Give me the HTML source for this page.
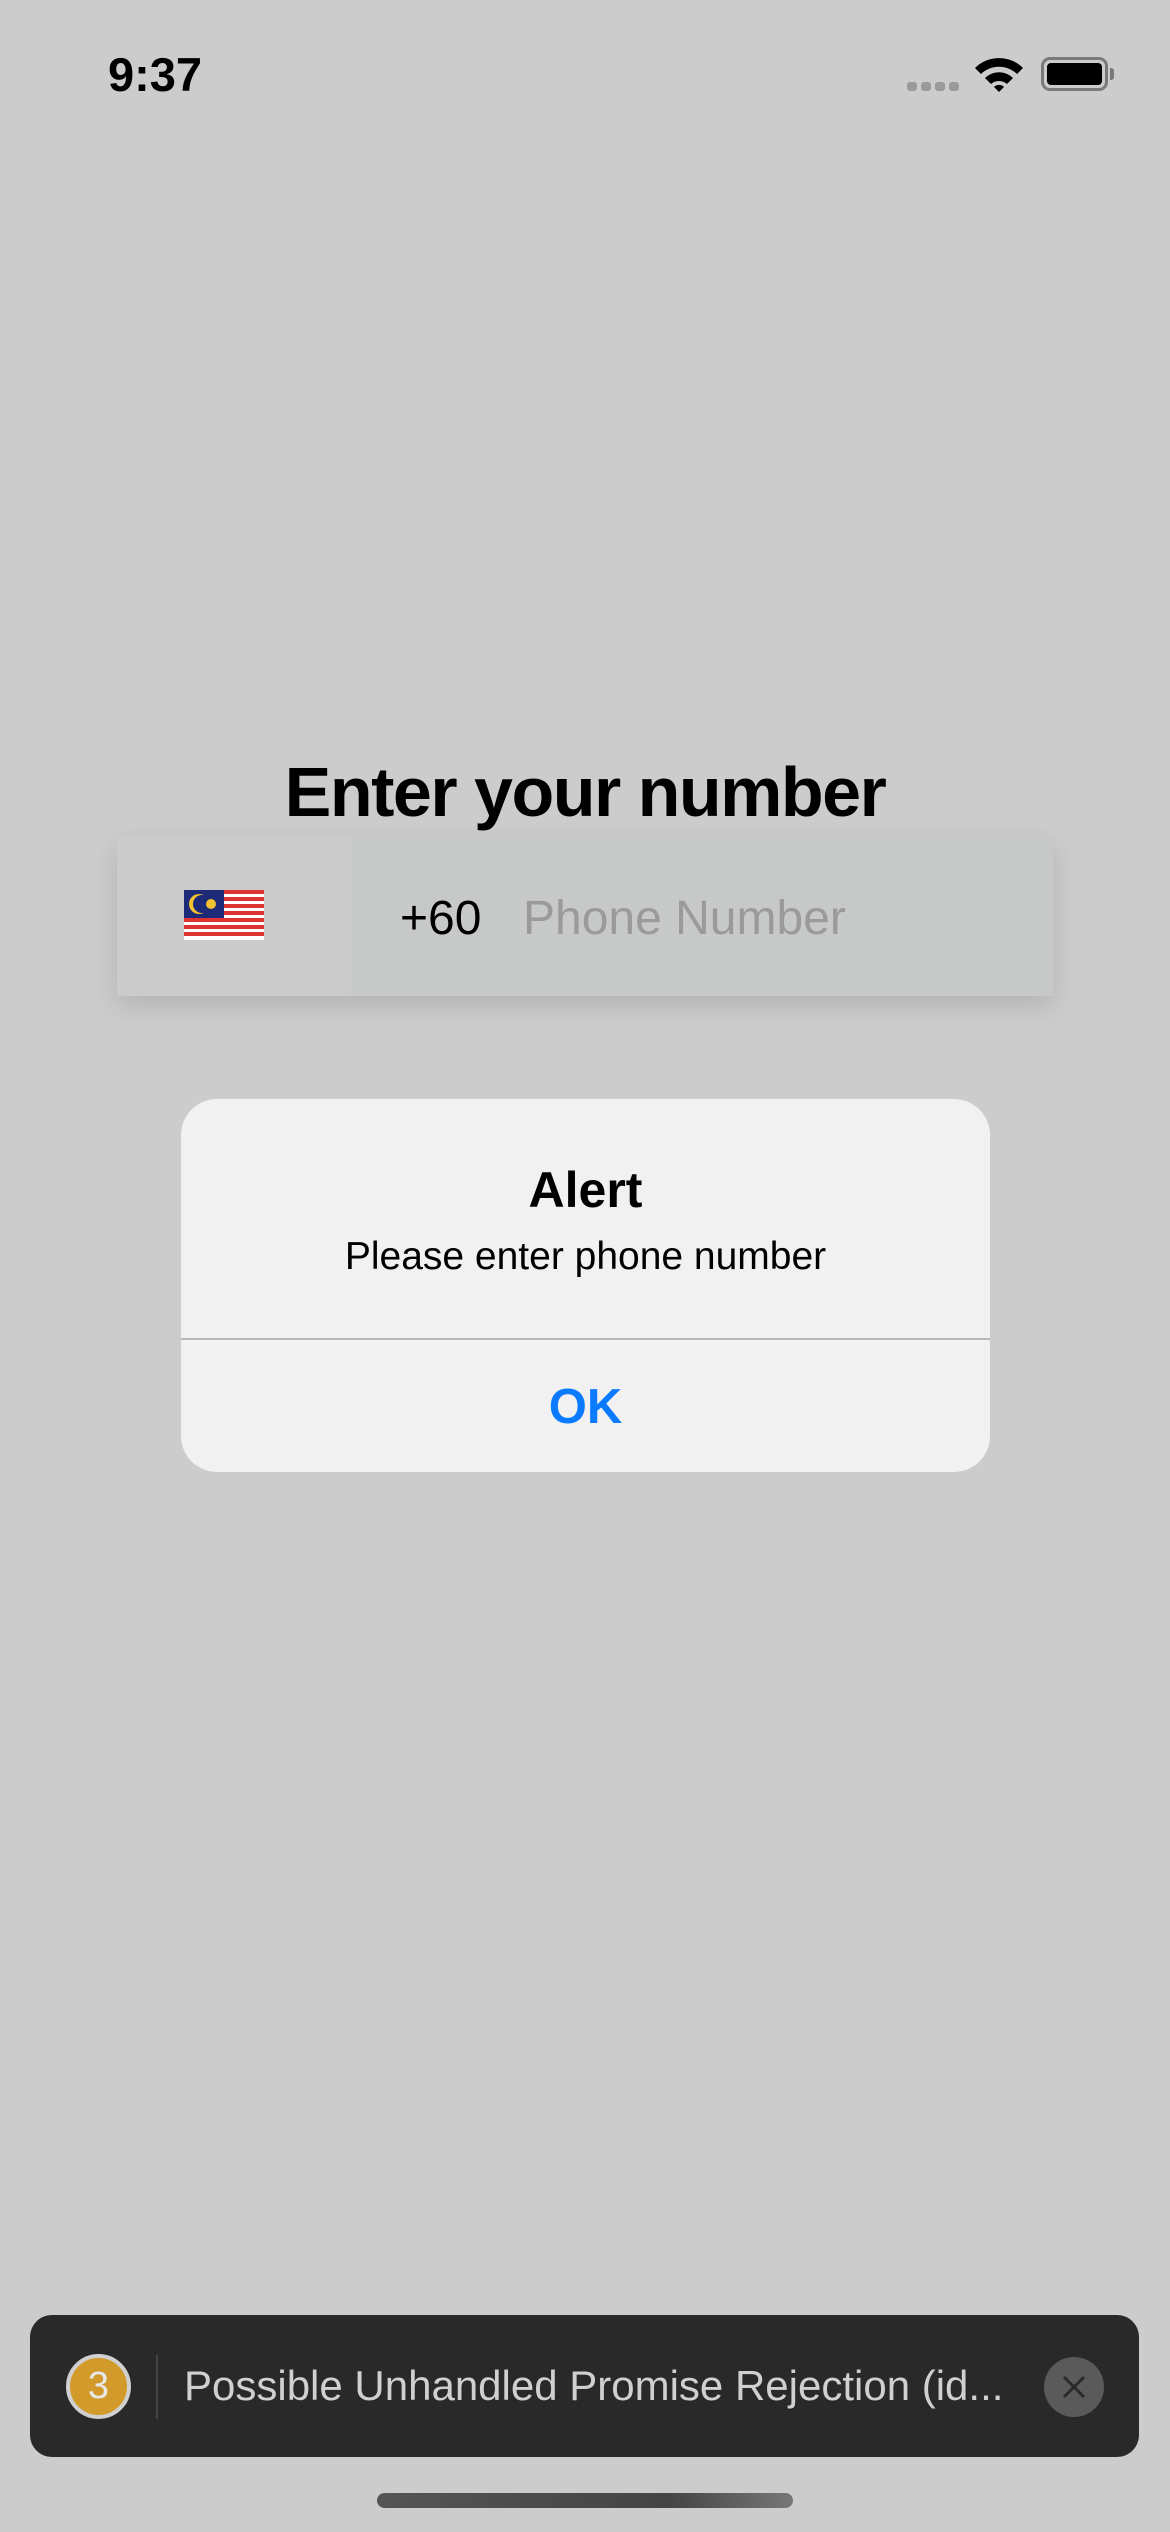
<!DOCTYPE html>
<html><head><meta charset="utf-8"><style>
*{margin:0;padding:0;box-sizing:border-box}
body{width:1170px;height:2532px;background:#cccccc;position:relative;overflow:hidden;font-family:"Liberation Sans",sans-serif}
.abs{position:absolute}
</style></head><body>
<div class="abs" style="left:108px;top:50px;font-size:47px;font-weight:bold;letter-spacing:0px;line-height:50px">9:37</div>
<div class="abs" style="left:907px;top:82px;width:52px;height:9px;display:flex;gap:4px">
<div style="flex:1;background:#9a9a9a;border-radius:3px"></div><div style="flex:1;background:#9a9a9a;border-radius:3px"></div><div style="flex:1;background:#9a9a9a;border-radius:3px"></div><div style="flex:1;background:#9a9a9a;border-radius:3px"></div></div>
<svg class="abs" style="left:972px;top:54px" width="54" height="38" viewBox="0 0 54 38"><path d="M3 14 A34 34 0 0 1 51 14 L45 20 A26 26 0 0 0 9 20Z" fill="#000"/><path d="M13 24 A20 20 0 0 1 41 24 L35 30 A12 12 0 0 0 19 30Z" fill="#000"/><path d="M22 33 A7 7 0 0 1 32 33 L27 38Z" fill="#000"/></svg>
<div class="abs" style="left:1041px;top:57px;width:67px;height:34px;border:3px solid #7a7a7a;border-radius:9px;padding:3px"><div style="width:100%;height:100%;background:#000;border-radius:4px"></div></div>
<div class="abs" style="left:1110px;top:68px;width:4px;height:12px;background:#7a7a7a;border-radius:0 3px 3px 0"></div>

<div class="abs" style="left:0;width:1170px;top:752px;text-align:center;font-size:70px;font-weight:bold;letter-spacing:-1.5px;line-height:80px">Enter your number</div>
<div class="abs" style="left:117px;top:836px;width:936px;height:160px;background:#c7c8c8;box-shadow:0 10px 24px rgba(0,0,0,0.12)">
<div class="abs" style="left:0;top:0;width:234px;height:160px;background:#cbcbcb"></div>
<svg class="abs" style="left:67px;top:50px" width="80" height="58" viewBox="0 0 80 58">
<g><rect x="0" y="4" width="80" height="50" fill="#fff"/>
<rect x="0" y="4" width="80" height="4" fill="#d33"/><rect x="0" y="11" width="80" height="4" fill="#d33"/><rect x="0" y="18" width="80" height="4" fill="#d33"/><rect x="0" y="25" width="80" height="4" fill="#d33"/><rect x="0" y="32" width="80" height="4" fill="#d33"/><rect x="0" y="39" width="80" height="4" fill="#d33"/><rect x="0" y="46" width="80" height="4" fill="#d33"/>
<rect x="0" y="4" width="40" height="28" fill="#1c2a78"/>
<circle cx="15" cy="18" r="10" fill="#f2c230"/><circle cx="18" cy="18" r="9" fill="#1c2a78"/><circle cx="27" cy="18" r="5" fill="#f2c230"/></g></svg>
<div class="abs" style="left:283px;top:56px;font-size:48px;line-height:54px;color:#000">+60</div>
<div class="abs" style="left:406px;top:56px;font-size:48px;line-height:54px;color:#9a9a9a">Phone Number</div>
</div>

<div class="abs" style="left:181px;top:1099px;width:809px;height:373px;background:#f0f1f0;border-radius:36px;overflow:hidden">
<div class="abs" style="left:0;width:100%;top:63px;text-align:center;font-size:50px;font-weight:bold;line-height:56px">Alert</div>
<div class="abs" style="left:0;width:100%;top:136px;text-align:center;font-size:39px;line-height:44px">Please enter phone number</div>
<div class="abs" style="left:0;width:100%;top:239px;height:2px;background:#b8b8b8"></div>
<div class="abs" style="left:0;width:100%;top:280px;text-align:center;font-size:49px;font-weight:bold;line-height:56px;color:#0a7aff">OK</div>
</div>

<div class="abs" style="left:30px;top:2315px;width:1109px;height:142px;background:#292929;border-radius:22px">
<div class="abs" style="left:36px;top:39px;width:65px;height:65px;border-radius:50%;background:#d29a2a;border:4px solid #d0d0d0;color:#e8e8e8;font-size:38px;text-align:center;line-height:57px">3</div>
<div class="abs" style="left:126px;top:40px;width:2px;height:64px;background:#444"></div>
<div class="abs" style="left:154px;top:47px;font-size:42px;line-height:48px;color:#d0d0d0;white-space:nowrap">Possible Unhandled Promise Rejection (id...</div>
<div class="abs" style="left:1014px;top:42px;width:60px;height:60px;border-radius:50%;background:#5a5a5a"></div>
<svg class="abs" style="left:1031px;top:59px" width="26" height="26"><path d="M3 3L23 23M23 3L3 23" stroke="#2a2a2a" stroke-width="3"/></svg>
</div>
<div class="abs" style="left:377px;top:2493px;width:416px;height:15px;border-radius:8px;background:linear-gradient(90deg,#555,#444 70%,#777)"></div>
</body></html>
